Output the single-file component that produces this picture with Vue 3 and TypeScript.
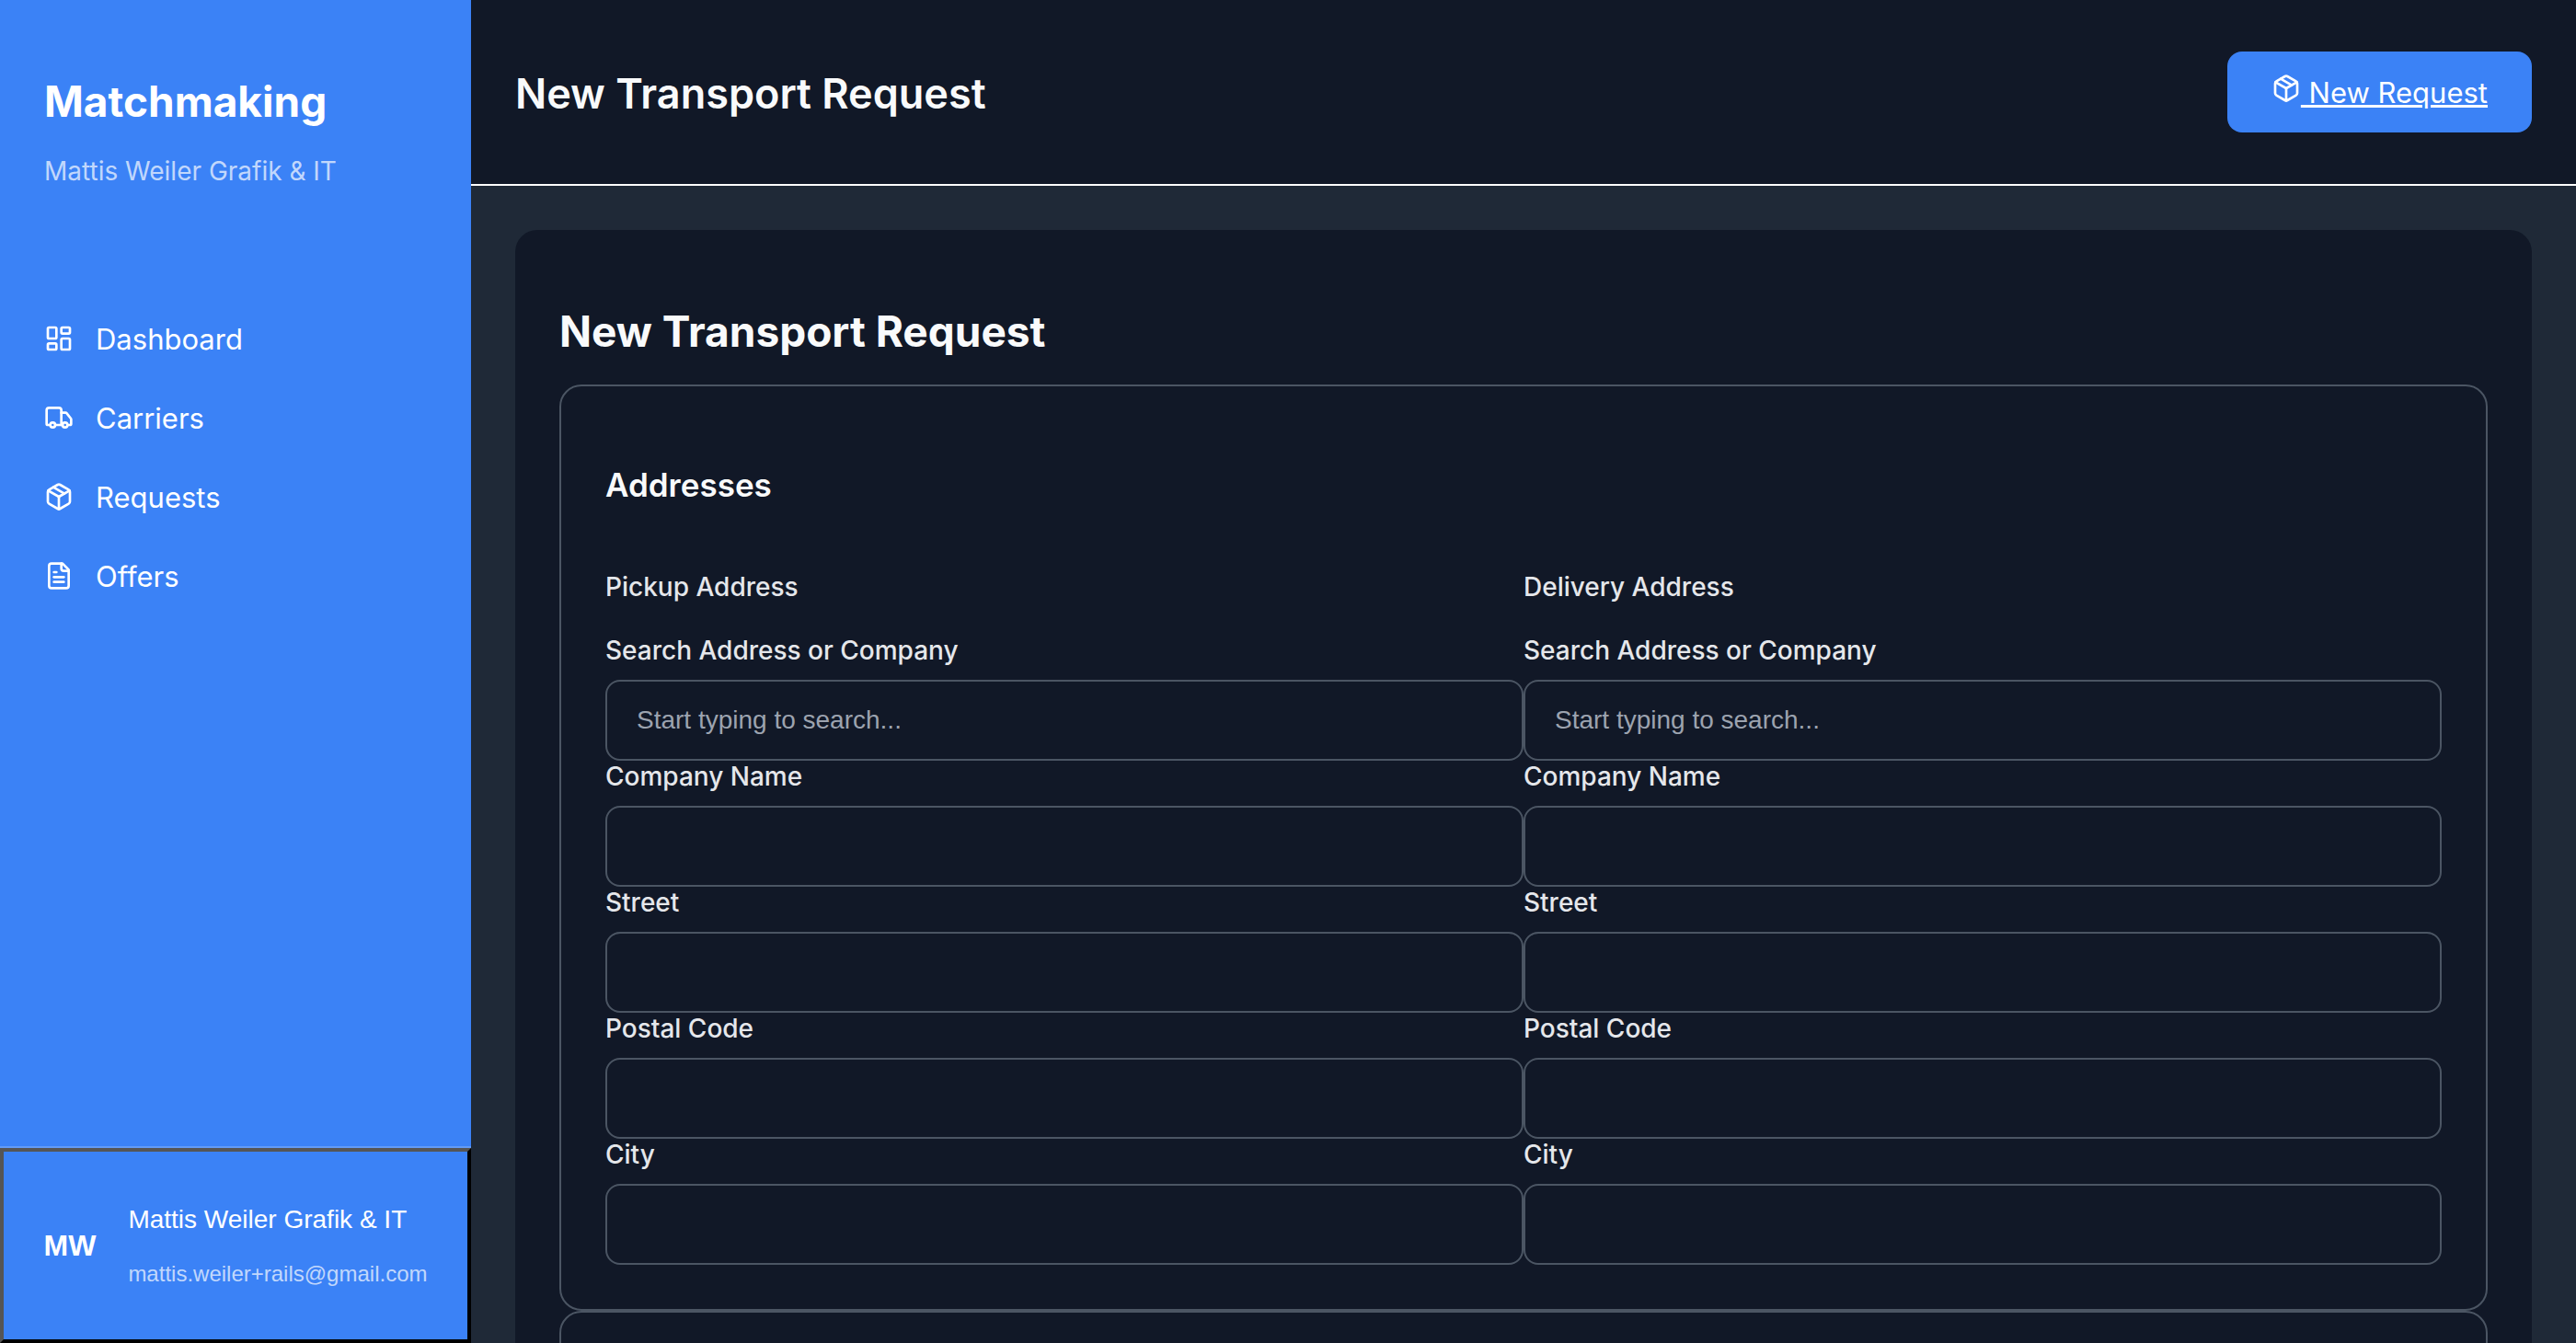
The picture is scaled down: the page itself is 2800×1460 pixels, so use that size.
<script setup lang="ts">
interface NavItem {
  label: string
  icon: 'dashboard' | 'truck' | 'package' | 'file'
}

interface Field {
  key: string
  label: string
  placeholder?: string
}

const navItems: NavItem[] = [
  { label: 'Dashboard', icon: 'dashboard' },
  { label: 'Carriers', icon: 'truck' },
  { label: 'Requests', icon: 'package' },
  { label: 'Offers', icon: 'file' },
]

const fields: Field[] = [
  { key: 'search', label: 'Search Address or Company', placeholder: 'Start typing to search...' },
  { key: 'company', label: 'Company Name' },
  { key: 'street', label: 'Street' },
  { key: 'postal', label: 'Postal Code' },
  { key: 'city', label: 'City' },
]

const addresses = [
  { key: 'pickup', title: 'Pickup Address' },
  { key: 'delivery', title: 'Delivery Address' },
]
</script>

<template>
  <div class="app">
    <aside class="sidebar">
      <div class="brand">
        <h1 class="brand-name">Matchmaking</h1>
        <p class="brand-owner">Mattis Weiler Grafik &amp; IT</p>
      </div>
      <nav class="nav">
        <a v-for="item in navItems" :key="item.label" href="#" class="nav-link">
          <svg class="icon" viewBox="0 0 24 24" aria-hidden="true">
            <template v-if="item.icon === 'dashboard'">
              <rect width="7" height="9" x="3" y="3" rx="1" />
              <rect width="7" height="5" x="14" y="3" rx="1" />
              <rect width="7" height="9" x="14" y="12" rx="1" />
              <rect width="7" height="5" x="3" y="16" rx="1" />
            </template>
            <template v-else-if="item.icon === 'truck'">
              <path d="M14 18V6a2 2 0 0 0-2-2H4a2 2 0 0 0-2 2v11a1 1 0 0 0 1 1h2" />
              <path d="M15 18H9" />
              <path d="M19 18h2a1 1 0 0 0 1-1v-3.65a1 1 0 0 0-.22-.624l-3.48-4.35A1 1 0 0 0 17.52 8H14" />
              <circle cx="17" cy="18" r="2" />
              <circle cx="7" cy="18" r="2" />
            </template>
            <template v-else-if="item.icon === 'package'">
              <path d="m7.5 4.27 9 5.15" />
              <path d="M21 8a2 2 0 0 0-1-1.73l-7-4a2 2 0 0 0-2 0l-7 4A2 2 0 0 0 3 8v8a2 2 0 0 0 1 1.73l7 4a2 2 0 0 0 2 0l7-4A2 2 0 0 0 21 16Z" />
              <path d="m3.3 7 8.7 5 8.7-5" />
              <path d="M12 22V12" />
            </template>
            <template v-else>
              <path d="M15 2H6a2 2 0 0 0-2 2v16a2 2 0 0 0 2 2h12a2 2 0 0 0 2-2V7Z" />
              <path d="M14 2v4a2 2 0 0 0 2 2h4" />
              <path d="M10 9H8" />
              <path d="M16 13H8" />
              <path d="M16 17H8" />
            </template>
          </svg>
          <span class="nav-label">{{ item.label }}</span>
        </a>
      </nav>
      <div class="account">
        <button type="button" class="account-button">
          <span class="initials">MW</span>
          <span class="account-text">
            <span class="account-name">Mattis Weiler Grafik &amp; IT</span>
            <span class="account-mail">mattis.weiler+rails@gmail.com</span>
          </span>
        </button>
      </div>
    </aside>

    <div class="content">
      <header class="topbar">
        <h1 class="page-title">New Transport Request</h1>
        <a href="#" class="new-request"><svg class="icon" viewBox="0 0 24 24" aria-hidden="true">
            <path d="m7.5 4.27 9 5.15" />
            <path d="M21 8a2 2 0 0 0-1-1.73l-7-4a2 2 0 0 0-2 0l-7 4A2 2 0 0 0 3 8v8a2 2 0 0 0 1 1.73l7 4a2 2 0 0 0 2 0l7-4A2 2 0 0 0 21 16Z" />
            <path d="m3.3 7 8.7 5 8.7-5" />
            <path d="M12 22V12" />
          </svg> New Request</a>
      </header>

      <main class="main">
        <form class="card" @submit.prevent>
          <h2 class="card-title">New Transport Request</h2>
          <section class="panel">
            <h3 class="panel-title">Addresses</h3>
            <div class="columns">
              <div v-for="address in addresses" :key="address.key" class="column">
                <h4 class="column-title">{{ address.title }}</h4>
                <div v-for="field in fields" :key="field.key" class="field">
                  <label class="label" :for="`${address.key}-${field.key}`">{{ field.label }}</label>
                  <input
                    :id="`${address.key}-${field.key}`"
                    class="input"
                    type="text"
                    :placeholder="field.placeholder"
                  />
                </div>
              </div>
            </div>
          </section>
          <section class="panel"></section>
        </form>
      </main>
    </div>
  </div>
</template>

<style>
body {
  background: #1f2937;
}
</style>

<style scoped>
.app {
  display: flex;
  height: 100vh;
  overflow: hidden;
  background: #1f2937;
  color: #f9fafb;
  font-family: Inter, "Liberation Sans", sans-serif;
  font-size: 31px;
}

h1,
h2,
h3,
h4,
p {
  margin: 0;
}

.icon {
  width: 32px;
  height: 32px;
  fill: none;
  stroke: currentColor;
  stroke-width: 2;
  stroke-linecap: round;
  stroke-linejoin: round;
}

.sidebar {
  display: flex;
  flex-direction: column;
  flex: none;
  width: 512px;
  background: #3b82f6;
  color: #ffffff;
}

.brand {
  padding: 74px 48px 72px;
}

.brand-name {
  font-size: 46px;
  line-height: 72px;
  font-weight: 700;
}

.brand-owner {
  margin-top: 19px;
  font-size: 28px;
  line-height: 42px;
  color: rgba(255, 255, 255, 0.7);
}

.nav {
  display: flex;
  flex-direction: column;
  flex: 1;
  padding-top: 46px;
}

.nav-link {
  display: flex;
  align-items: center;
  gap: 24px;
  padding: 15px 48px;
  line-height: 54px;
  color: inherit;
  text-decoration: none;
}

.nav-label {
  padding-top: 2px;
}

.account {
  border-top: 2px solid rgba(255, 255, 255, 0.2);
}

.account-button {
  display: flex;
  align-items: center;
  justify-content: center;
  gap: 35px;
  box-sizing: border-box;
  width: 100%;
  height: 212px;
  padding: 0;
  border: 4px solid;
  border-color: #555555 #000000 #000000 #555555;
  background: #3b82f6;
  color: #ffffff;
  font-family: "Liberation Sans", Arial, sans-serif;
  text-align: left;
}

.initials {
  font-size: 32px;
  font-weight: 700;
}

.account-text {
  display: flex;
  flex-direction: column;
  gap: 20px;
}

.account-name {
  font-size: 28px;
  line-height: 42px;
}

.account-mail {
  font-size: 24px;
  line-height: 36px;
  color: rgba(255, 255, 255, 0.7);
}

.content {
  display: flex;
  flex-direction: column;
  flex: 1;
  min-width: 0;
}

.topbar {
  display: flex;
  align-items: center;
  justify-content: space-between;
  padding: 56px 48px;
  border-bottom: 2px solid #ffffff;
  background: #111827;
}

.page-title {
  padding-top: 4px;
  font-size: 45px;
  line-height: 72px;
  font-weight: 600;
}

.new-request {
  padding: 21px 48px 19px;
  border-radius: 16px;
  background: #3b82f6;
  color: #ffffff;
  line-height: 48px;
  text-decoration-thickness: 3px;
}

.main {
  flex: 1;
  min-height: 0;
  overflow: hidden;
  padding: 48px 48px 0;
}

.card {
  padding: 48px;
  border-radius: 24px;
  background: #111827;
}

.card-title {
  margin: 26px 0 22px;
  font-size: 46px;
  line-height: 72px;
  font-weight: 700;
}

.panel {
  min-height: 128px;
  padding: 32px 48px 48px;
  border: 2px solid #4b5563;
  border-radius: 24px;
}

.panel-title {
  margin: 48px 0 62px;
  font-size: 35px;
  line-height: 54px;
  font-weight: 600;
}

.columns {
  display: grid;
  grid-template-columns: 1fr 1fr;
}

.column-title {
  margin-bottom: 30px;
  font-size: 28px;
  line-height: 44px;
  font-weight: 500;
  color: #e5e7eb;
}

.label {
  display: block;
  margin-bottom: 14px;
  font-size: 28px;
  line-height: 35px;
  font-weight: 500;
  color: #e5e7eb;
}

.input {
  display: block;
  box-sizing: border-box;
  width: 100%;
  height: 88px;
  padding: 0 32px;
  border: 2px solid #4b5563;
  border-radius: 16px;
  background: transparent;
  color: #f9fafb;
  font-family: "Liberation Sans", Arial, sans-serif;
  font-size: 28px;
}

.input::placeholder {
  color: #9ca3af;
  opacity: 1;
}
</style>
